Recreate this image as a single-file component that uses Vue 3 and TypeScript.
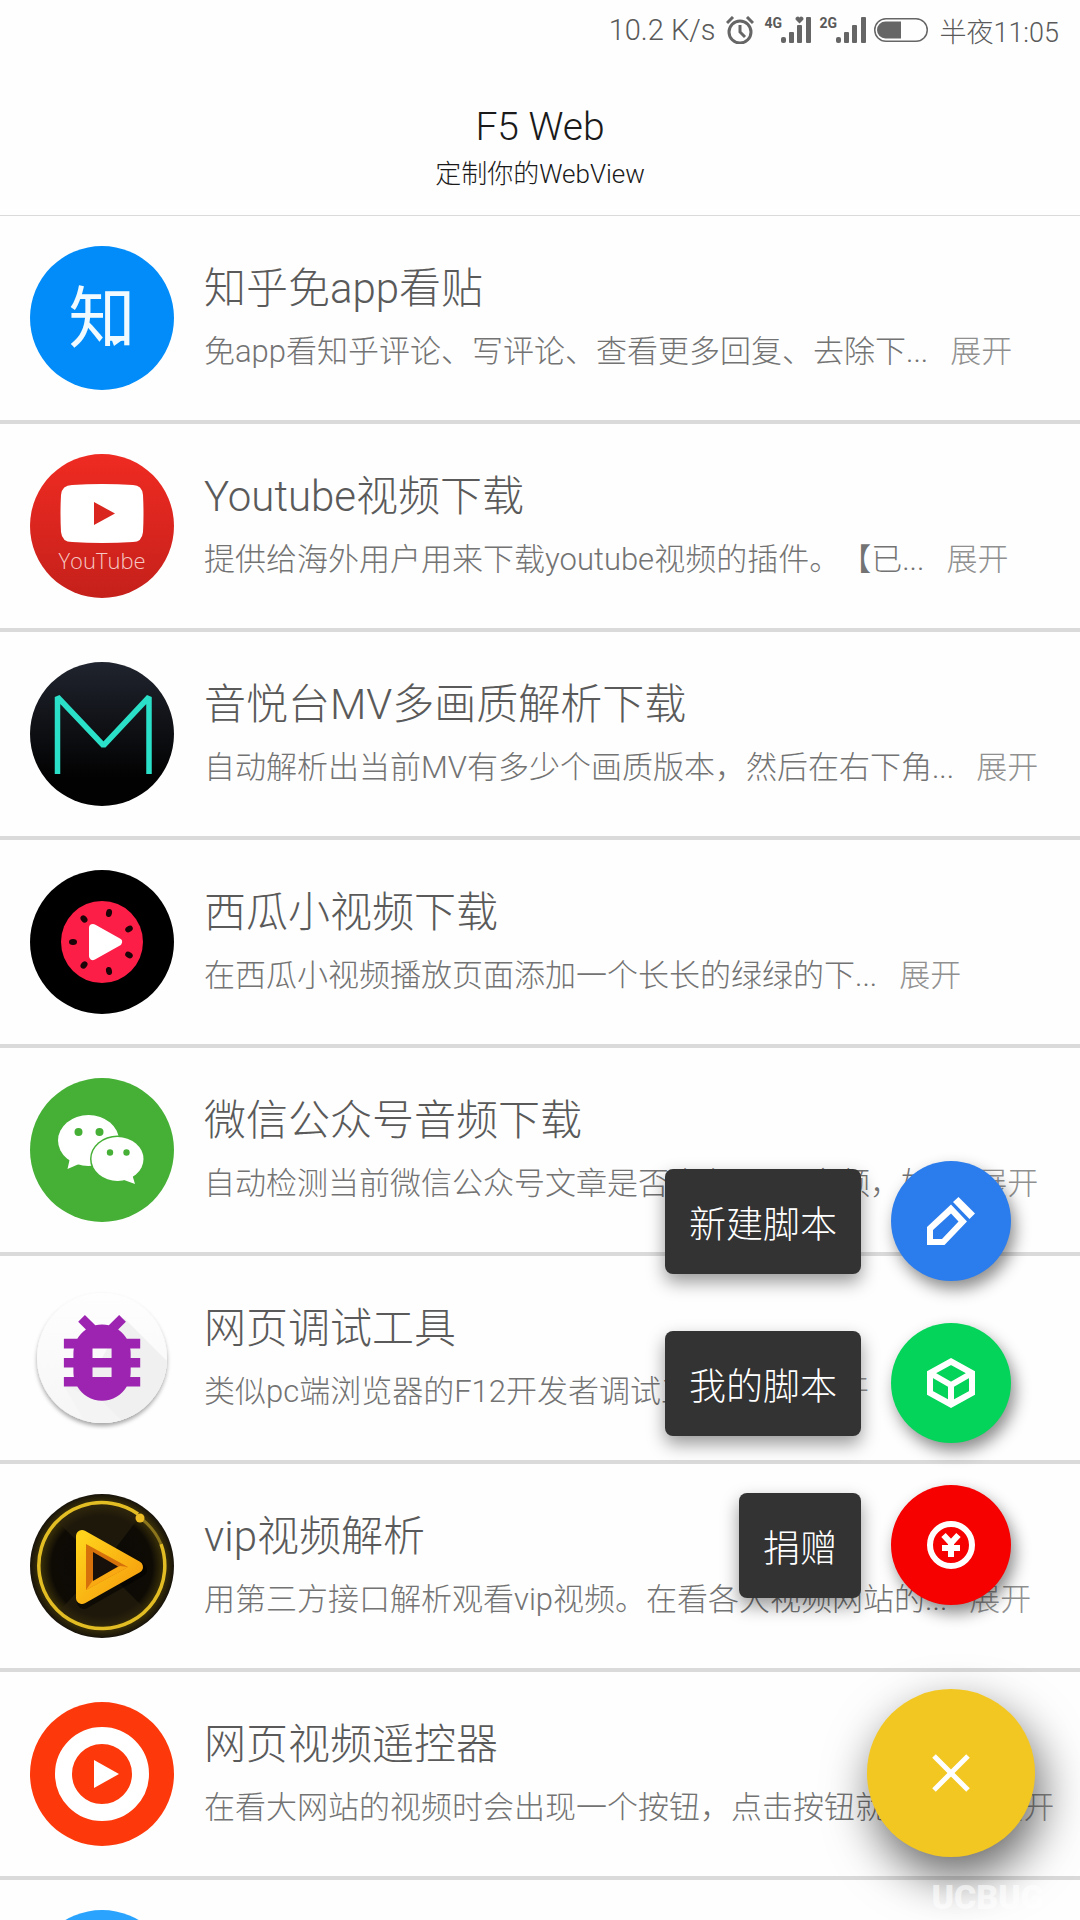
<script setup lang="ts">
import { ref } from 'vue'

interface Script {
  icon: string
  title: string
  desc: string
}

interface Action {
  icon: string
  label: string
}

const scripts: Script[] = [
  { icon: 'zhihu', title: '知乎免app看贴', desc: '免app看知乎评论、写评论、查看更多回复、去除下...' },
  { icon: 'youtube', title: 'Youtube视频下载', desc: '提供给海外用户用来下载youtube视频的插件。【已...' },
  { icon: 'mv', title: '音悦台MV多画质解析下载', desc: '自动解析出当前MV有多少个画质版本，然后在右下角...' },
  { icon: 'melon', title: '西瓜小视频下载', desc: '在西瓜小视频播放页面添加一个长长的绿绿的下...' },
  { icon: 'wechat', title: '微信公众号音频下载', desc: '自动检测当前微信公众号文章是否含有 mp3 音频，如...' },
  { icon: 'bug', title: '网页调试工具', desc: '类似pc端浏览器的F12开发者调试工具面板' },
  { icon: 'vip', title: 'vip视频解析', desc: '用第三方接口解析观看vip视频。在看各大视频网站的...' },
  { icon: 'remote', title: '网页视频遥控器', desc: '在看大网站的视频时会出现一个按钮，点击按钮就可以...' },
  { icon: 'next', title: '', desc: '' },
]

const actions: Action[] = [
  { icon: 'edit', label: '新建脚本' },
  { icon: 'box', label: '我的脚本' },
  { icon: 'donate', label: '捐赠' },
]

const open = ref(true)
</script>

<template>
  <div class="app">
    <div class="status">
      <span class="speed">10.2 K/s</span>
      <svg class="alarm" viewBox="0 0 28 28" width="28" height="28" fill="none" stroke="#666">
        <circle cx="14" cy="16" r="11" stroke-width="3" />
        <path d="M14 9v7l5 5" stroke-width="3" />
        <path d="M1 7L7 1M27 7L21 1" stroke-width="3" />
      </svg>
      <div class="signal">
        <span>4G</span>
        <svg viewBox="0 0 30 28" width="30" height="28" fill="#666">
          <rect x="0" y="21" width="5" height="6" rx="2" />
          <rect x="8" y="16" width="5" height="11" rx="1" />
          <rect x="16" y="9" width="5" height="18" rx="1" />
          <rect x="25" y="1" width="5" height="26" rx="1" />
          <path d="M18.500 7.500L15 4a2 2 0 0 1 3.500-2.500A2 2 0 0 1 22 4z" />
        </svg>
      </div>
      <div class="signal">
        <span>2G</span>
        <svg viewBox="0 0 30 28" width="30" height="28" fill="#666">
          <rect x="0" y="21" width="5" height="6" rx="2" />
          <rect x="8" y="16" width="5" height="11" rx="1" />
          <rect x="16" y="9" width="5" height="18" rx="1" />
          <rect x="25" y="1" width="5" height="26" rx="1" />
        </svg>
      </div>
      <svg class="battery" viewBox="0 0 54 24" width="54" height="24">
        <rect x="0.750" y="0.750" width="52.500" height="22.500" rx="11.250" fill="none" stroke="#666" stroke-width="1.500" />
        <path d="M27 3.500v17H11.500a8.500 8.500 0 0 1 0-17z" fill="#666" />
      </svg>
      <time class="clock">半夜11:05</time>
    </div>

    <header class="header">
      <h1>F5 Web</h1>
      <p>定制你的WebView</p>
    </header>

    <ul class="list">
      <li v-for="s in scripts" :key="s.icon" class="row">
        <svg class="logo" viewBox="0 0 144 144" width="144" height="144">
          <template v-if="s.icon === 'zhihu'">
            <circle cx="72" cy="72" r="72" fill="#028cf9" />
            <text class="zhi" x="72" y="96" text-anchor="middle">知</text>
            <path d="M81 92h14l-11 8z" fill="#f0faff" />
          </template>

          <template v-else-if="s.icon === 'youtube'">
            <defs>
              <linearGradient id="yt" x1="0" y1="0" x2="0" y2="1">
                <stop offset="0" stop-color="#ef2b22" />
                <stop offset="1" stop-color="#c5201b" />
              </linearGradient>
            </defs>
            <circle cx="72" cy="72" r="72" fill="url(#yt)" />
            <path d="M42 31Q72 29 103 31Q112 31 113 41Q114 60 113 78Q112 88 103 88Q72 90 42 88Q32 88 31 78Q30 60 31 41Q32 31 42 31z" fill="#fff" />
            <path d="M64 48l21 11.500-21 11.500z" fill="#d9261f" />
            <text class="yt-word" x="72" y="115" text-anchor="middle">YouTube</text>
          </template>

          <template v-else-if="s.icon === 'mv'">
            <defs>
              <linearGradient id="mv" x1="0" y1="0" x2="0" y2="1">
                <stop offset="0" stop-color="#20242e" />
                <stop offset="0.800" stop-color="#020202" />
              </linearGradient>
            </defs>
            <circle cx="72" cy="72" r="72" fill="url(#mv)" />
            <path d="M27.500 112V35L73.500 83.500L119 35V112" fill="none" stroke="#2be0c8" stroke-width="5.500" stroke-linejoin="bevel" />
          </template>

          <template v-else-if="s.icon === 'melon'">
            <circle cx="72" cy="72" r="72" fill="#000" />
            <circle cx="72" cy="72" r="41" fill="#fc1e46" />
            <g fill="#1a0408">
              <ellipse cx="79" cy="43" rx="3" ry="4" transform="rotate(12 79 43)" />
              <ellipse cx="54" cy="49" rx="3" ry="4" transform="rotate(-40 54 49)" />
              <ellipse cx="99" cy="59" rx="3" ry="4" transform="rotate(60 99 59)" />
              <ellipse cx="43" cy="72" rx="4" ry="3" />
              <ellipse cx="99" cy="85" rx="3" ry="4" transform="rotate(-60 99 85)" />
              <ellipse cx="54" cy="95" rx="3" ry="4" transform="rotate(40 54 95)" />
              <ellipse cx="79" cy="101" rx="3" ry="4" transform="rotate(-12 79 101)" />
            </g>
            <path d="M63 58l25 14-25 14z" fill="#fff" stroke="#fff" stroke-width="8" stroke-linejoin="round" />
          </template>

          <template v-else-if="s.icon === 'wechat'">
            <circle cx="72" cy="72" r="72" fill="#45b035" />
            <ellipse cx="58.500" cy="62.500" rx="30.500" ry="25.500" fill="#fff" />
            <path d="M40 80l-2.500 11L49 86z" fill="#fff" />
            <ellipse cx="87.500" cy="81" rx="27.500" ry="23.500" fill="#45b035" />
            <ellipse cx="87.500" cy="81" rx="26" ry="22" fill="#fff" />
            <path d="M94 102l11 4-3-10z" fill="#fff" />
            <g fill="#45b035">
              <circle cx="48.500" cy="54" r="4" />
              <circle cx="69.500" cy="54" r="4" />
              <circle cx="80" cy="74.500" r="3.200" />
              <circle cx="96.500" cy="74.500" r="3.200" />
            </g>
          </template>

          <template v-else-if="s.icon === 'bug'">
            <defs>
              <linearGradient id="bugbg" x1="0" y1="0" x2="0" y2="1">
                <stop offset="0" stop-color="#fefefe" />
                <stop offset="1" stop-color="#f6f6f6" />
              </linearGradient>
              <filter id="bugshadow" x="-10%" y="-10%" width="120%" height="120%">
                <feDropShadow dx="0" dy="3" stdDeviation="2" flood-color="#000" flood-opacity="0.350" />
              </filter>
              <clipPath id="bugclip"><circle cx="72" cy="72" r="65" /></clipPath>
            </defs>
            <circle cx="72" cy="72" r="65" fill="url(#bugbg)" filter="url(#bugshadow)" />
            <g clip-path="url(#bugclip)">
              <path d="M94 32L150 88V150H76L34 100L72 72z" fill="#f0f0f0" />
              <path d="M72 115L102 145H60L34 100z" fill="#f4f4f4" />
            </g>
            <path
              transform="translate(14.800 14.700) scale(4.770)"
              fill="#9c24b0"
              d="M20 8h-2.810c-.45-.78-1.070-1.450-1.820-1.960L17 4.410 15.590 3l-2.170 2.170C12.960 5.060 12.490 5 12 5s-.96.06-1.410.17L8.410 3 7 4.410l1.620 1.630C7.880 6.550 7.260 7.220 6.810 8H4v2h2.090c-.05.33-.09.66-.09 1v1H4v2h2v1c0 .34.04.67.09 1H4v2h2.810c1.040 1.790 2.970 3 5.190 3s4.150-1.210 5.190-3H20v-2h-2.090c.05-.33.09-.66.09-1v-1h2v-2h-2v-1c0-.34-.04-.67-.09-1H20V8zm-6 8h-4v-2h4v2zm0-4h-4v-2h4v2z"
            />
          </template>

          <template v-else-if="s.icon === 'vip'">
            <defs>
              <radialGradient id="vipbg">
                <stop offset="0" stop-color="#0b0906" />
                <stop offset="0.700" stop-color="#0e0b05" />
                <stop offset="0.870" stop-color="#3d3309" />
                <stop offset="1" stop-color="#17130a" />
              </radialGradient>
              <linearGradient id="gold" x1="0" y1="0" x2="1" y2="1">
                <stop offset="0" stop-color="#ffd31c" />
                <stop offset="1" stop-color="#f59a0c" />
              </linearGradient>
            </defs>
            <circle cx="72" cy="72" r="72" fill="url(#vipbg)" />
            <path d="M72 72L28 28A62 62 0 0 1 110 22zM72 72L114 114A62 62 0 0 1 30 116z" fill="#29220f" opacity="0.600" />
            <path d="M131 50A63 63 0 1 1 108 20" fill="none" stroke="#e3bd24" stroke-width="3.500" />
            <path d="M113 26A63 63 0 0 1 131 50" fill="none" stroke="#8a741c" stroke-width="3" />
            <circle cx="110" cy="24" r="4.500" fill="#edbd25" />
            <path d="M52 43L108 73L52 105z" fill="#000" stroke="#000" stroke-width="14" stroke-linejoin="round" opacity="0.500" transform="translate(2 3)" />
            <path d="M52 42L107 73L52 104z" fill="url(#gold)" stroke="url(#gold)" stroke-width="12" stroke-linejoin="round" />
            <path d="M56 50L98 73L56 96z" fill="#d5700b" />
            <path d="M56 96L98 73L90 72L63 86z" fill="#f9a912" />
            <path d="M63 58L88 72.500L63 87z" fill="#17100a" />
          </template>

          <template v-else-if="s.icon === 'remote'">
            <circle cx="72" cy="72" r="72" fill="#fd390b" />
            <circle cx="72" cy="72" r="38.500" fill="none" stroke="#fff" stroke-width="17" />
            <path d="M64 58l25 14-25 14z" fill="#fff" />
          </template>

          <circle v-else cx="72" cy="72" r="72" fill="#29a3fd" />
        </svg>
        <div v-if="s.title" class="body">
          <h2>{{ s.title }}</h2>
          <div class="desc">
            <span>{{ s.desc }}</span>
            <button type="button" class="more">展开</button>
          </div>
        </div>
      </li>
    </ul>

    <div class="dial">
      <template v-if="open">
        <div v-for="a in actions" :key="a.icon" class="action">
          <label class="tip" :for="'act-' + a.icon">{{ a.label }}</label>
          <button :id="'act-' + a.icon" type="button" class="mini" :class="a.icon">
            <svg v-if="a.icon === 'edit'" viewBox="0 0 48 48" width="48" height="48" fill="#fff">
              <path fill-rule="evenodd" d="M0 48V30L24 7.500L40 24.500L17.500 48zM6 42H15L31.500 24.500L24 16.500L6 33z" />
              <path d="M26 5L31.500 0L48 16.500L42.500 22z" />
            </svg>
            <svg v-else-if="a.icon === 'box'" viewBox="0 0 48 50" width="48" height="50" fill="none" stroke="#fff" stroke-width="6">
              <path d="M24 3.500L45 15V35L24 46.500L3 35V15zM3 15L24 27L45 15M24 27V46" />
            </svg>
            <svg v-else viewBox="0 0 48 48" width="48" height="48" fill="none" stroke="#fff" stroke-width="6">
              <circle cx="24" cy="24" r="21" />
              <path d="M16.500 14L24 22L31.500 14M15 27H33M24 20V36" />
            </svg>
          </button>
        </div>
      </template>
      <button type="button" class="fab" aria-label="关闭" @click="open = !open">
        <svg viewBox="0 0 38 38" width="38" height="38" fill="none" stroke="#fff" stroke-width="5">
          <path d="M2 2L36 36M36 2L2 36" />
        </svg>
      </button>
    </div>

    <span class="mark">UCBUG</span>
  </div>
</template>

<style>
body {
  margin: 0;
}
</style>

<style scoped>
.app {
  position: relative;
  display: flex;
  flex-direction: column;
  height: 100vh;
  overflow: hidden;
  background: #fefefe;
  color: #5a5a5a;
  font-family: Roboto, "Noto Sans CJK SC", sans-serif;
  font-weight: 300;
  text-spacing-trim: space-all;
}

h1,
h2,
p,
ul {
  margin: 0;
  padding: 0;
  font-weight: 300;
}

button {
  border: 0;
  padding: 0;
  background: none;
  font: inherit;
  cursor: pointer;
}

.status {
  display: flex;
  justify-content: flex-end;
  align-items: center;
  flex: none;
  height: 60px;
  padding-right: 21px;
}

.speed {
  font-size: 29px;
}

.alarm {
  margin: 0 10px 0 11px;
}

.signal {
  display: flex;
  margin-right: 8px;
}

.signal span {
  width: 17px;
  font-size: 14px;
  line-height: 14px;
  font-weight: 700;
}

.clock {
  margin-left: 11px;
  font-size: 27px;
}

.header {
  flex: none;
  height: 156px;
  border-bottom: 1px solid #dadada;
  box-sizing: border-box;
  padding-top: 41px;
  text-align: center;
  color: #1a1a1a;
}

.header h1 {
  font-size: 39px;
  line-height: 52px;
}

.header p {
  font-size: 26px;
  line-height: 42px;
}

.list {
  flex: 1;
  min-height: 0;
  overflow: hidden;
  list-style: none;
}

.row {
  display: flex;
  align-items: center;
  gap: 30px;
  padding: 30px;
  border-bottom: 4px solid #dadada;
}

.logo {
  flex: none;
}

.zhi {
  fill: #f0faff;
  font-size: 67px;
  font-weight: 400;
}

.yt-word {
  fill: #f6c9c4;
  font-family: "Open Sans", sans-serif;
  font-size: 22px;
  font-weight: 300;
}

.body {
  padding-top: 2px;
  white-space: nowrap;
}

.body h2 {
  font-size: 42px;
  line-height: 66px;
}

.desc {
  display: flex;
  gap: 22px;
  font-size: 31px;
  line-height: 60px;
  color: #737373;
}

.more {
  color: #909090;
}

.dial {
  position: absolute;
  right: 45px;
  bottom: 63px;
  display: flex;
  flex-direction: column;
  align-items: flex-end;
  gap: 42px;
}

.action {
  display: flex;
  align-items: center;
  gap: 30px;
  margin-right: 24px;
}

.tip {
  padding: 28px 24px 20px;
  border-radius: 8px;
  background: #333;
  color: #fff;
  font-size: 37px;
  line-height: 57px;
  box-shadow: 0 8px 18px rgba(0, 0, 0, 0.4);
}

.mini,
.fab {
  display: flex;
  align-items: center;
  justify-content: center;
  border-radius: 50%;
}

.mini {
  width: 120px;
  height: 120px;
  box-shadow: 4px 8px 16px rgba(0, 0, 0, 0.45);
}

.edit {
  background: #2b7cec;
}

.box {
  background: #04d459;
}

.donate {
  background: #f60000;
}

.fab {
  width: 168px;
  height: 168px;
  margin-top: 42px;
  background: #f3c721;
  box-shadow: 6px 20px 48px rgba(0, 0, 0, 0.6);
}

.mark {
  position: absolute;
  right: 36px;
  bottom: 6px;
  color: rgba(255, 255, 255, 0.6);
  font-size: 34px;
  line-height: 34px;
  font-weight: 900;
}
</style>
